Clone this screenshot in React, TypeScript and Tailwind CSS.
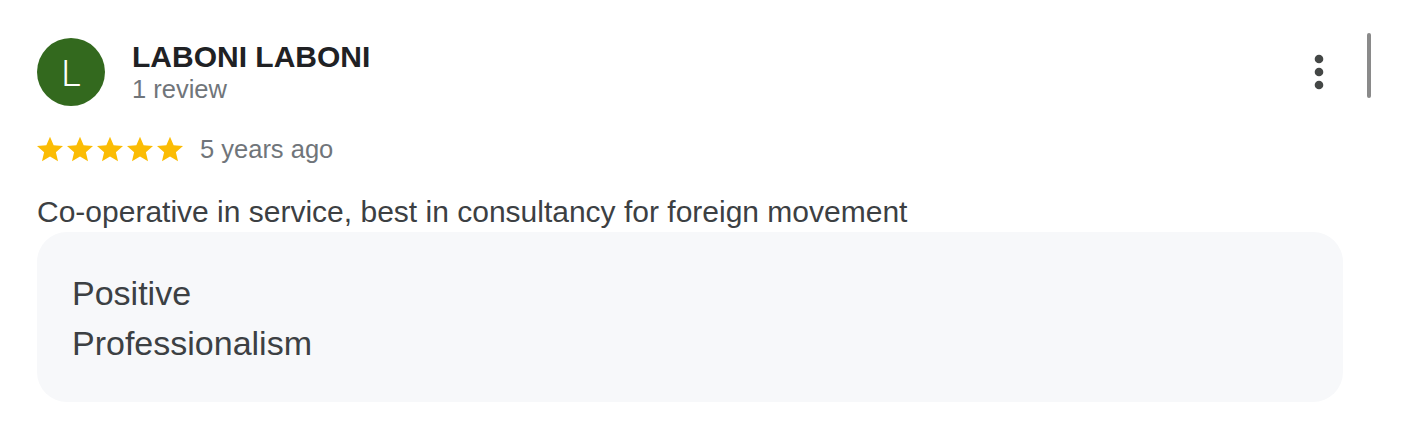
const STAR = "M12 17.27L18.18 21l-1.64-7.03L22 9.24l-7.19-.61L12 2 9.19 8.63 2 9.24l5.46 4.73L5.82 21z";

function Star() {
  return (
    <svg width="26" height="26" viewBox="2 1.5 20 20" className="shrink-0">
      <path d={STAR} fill="#fbbc04" />
    </svg>
  );
}

export default function App() {
  return (
    <div className="relative w-[1416px] h-[445px] bg-white font-['Liberation_Sans',Arial,sans-serif]">
      <div className="w-[1306px] ml-[37px] pt-[38px]">
        {/* header: avatar, name, menu */}
        <div className="flex items-start">
          <div className="w-[68px] h-[68px] rounded-full bg-[#33691e] flex items-center justify-center shrink-0">
            <span className="text-white text-[37px] leading-none font-light font-['Roboto',sans-serif] mt-[2px]">L</span>
          </div>
          <div className="flex-1 ml-[27px] mt-[2px]">
            <div className="text-[30px] leading-[34px] font-bold text-[#202124]">LABONI LABONI</div>
            <div className="text-[25.5px] leading-[30px] text-[#70757a]">1 review</div>
          </div>
          <div className="w-[48px] h-[68px] flex items-center justify-center">
            <svg width="10" height="36" viewBox="0 0 10 36">
              <circle cx="5" cy="5" r="4.3" fill="#444746" />
              <circle cx="5" cy="18" r="4.3" fill="#444746" />
              <circle cx="5" cy="31" r="4.3" fill="#444746" />
            </svg>
          </div>
        </div>

        {/* rating row */}
        <div className="flex items-center h-[30px] mt-[28px]">
          <div className="flex gap-[4px]">
            <Star />
            <Star />
            <Star />
            <Star />
            <Star />
          </div>
          <span className="ml-[17px] text-[25.5px] leading-[30px] text-[#70757a]">5 years ago</span>
        </div>

        <p className="mt-[31px] text-[30px] leading-[34px] text-[#3c4043]">
          Co-operative in service, best in consultancy for foreign movement
        </p>

        <div className="mt-[3px] rounded-[30px] bg-[#f7f8fa] pt-[36px] pb-[34px] pl-[35px]">
          <div className="text-[34px] leading-[50px] text-[#3c4043]">Positive</div>
          <div className="text-[34px] leading-[50px] text-[#3c4043]">Professionalism</div>
        </div>
      </div>

      {/* scrollbar thumb */}
      <div className="absolute left-[1367px] top-[33px] w-[4px] h-[65px] rounded-full bg-[#8a8a8a]" />
    </div>
  );
}
